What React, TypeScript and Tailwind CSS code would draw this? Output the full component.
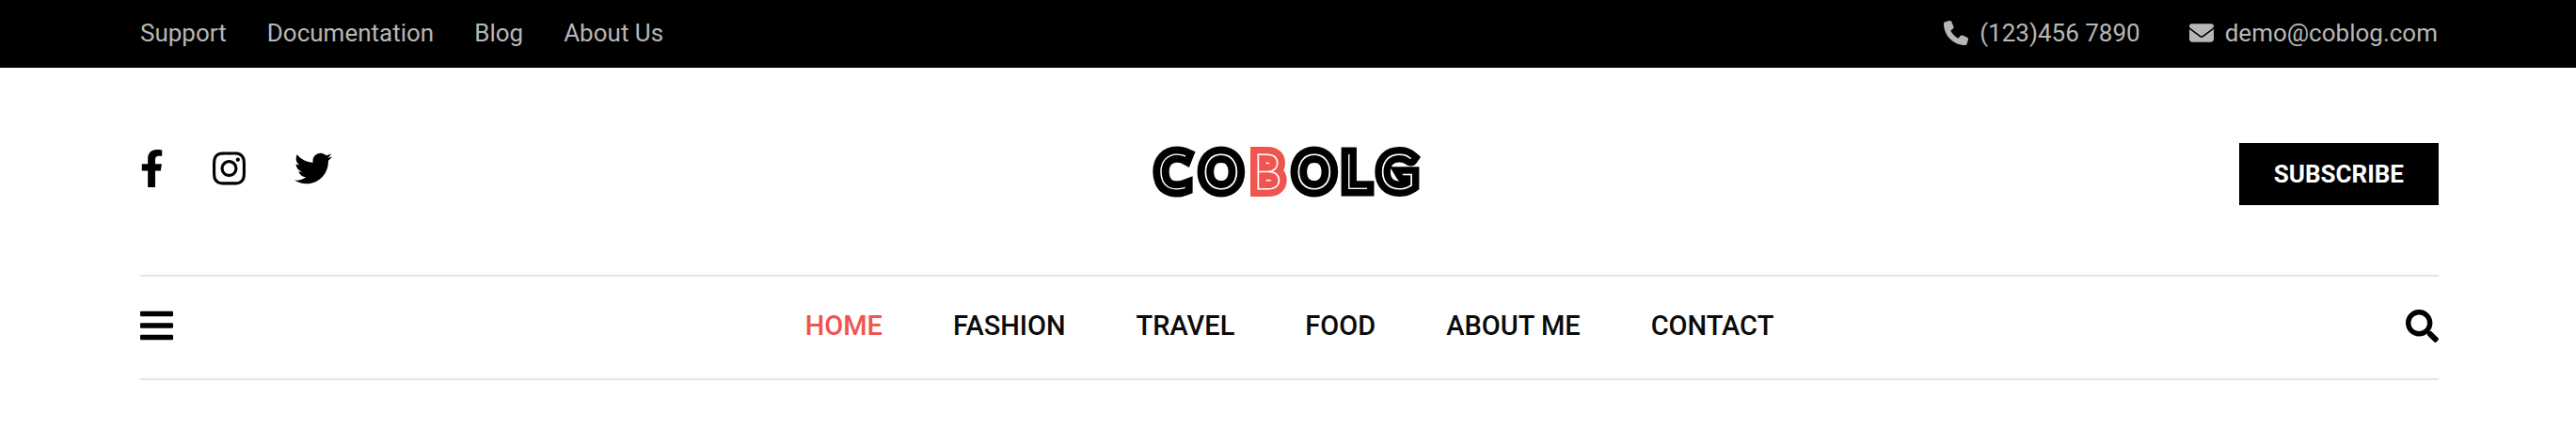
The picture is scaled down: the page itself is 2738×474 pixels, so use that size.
import { FaFacebookF, FaInstagram, FaTwitter, FaBars, FaSearch } from "react-icons/fa";
import { FaPhone, FaEnvelope } from "react-icons/fa6";

const topLinks = ["Support", "Documentation", "Blog", "About Us"];
const navLinks = ["HOME", "FASHION", "TRAVEL", "FOOD", "ABOUT ME", "CONTACT"];

const lato = "font-['Lato',sans-serif]";
const noto = "font-['Noto_Sans',sans-serif]";

const letters = [
  { char: "C", x: 20, color: "#000000", font: noto, weight: 16, line: 0 },
  { char: "O", x: 72, color: "#000000", font: lato, weight: 17, line: 1 },
  { char: "B", x: 121, color: "#f0544f", font: lato, weight: 16, line: 1 },
  { char: "O", x: 171, color: "#000000", font: lato, weight: 17, line: 1 },
  { char: "L", x: 215, color: "#000000", font: noto, weight: 15, line: 0 },
  { char: "G", x: 259, color: "#000000", font: lato, weight: 16, line: 1 },
];

/* Inline lettering: a thin white letter over the same letter with a heavy outline. */
function Logo() {
  return (
    <svg
      viewBox="0 0 290 72"
      className="h-[72px] w-[290px] overflow-visible text-[52px] font-thin"
      role="img"
      aria-label="COBOLG"
    >
      {letters.map(({ char, x, color, font, weight, line }, i) => (
        <g key={i} textAnchor="middle" className={font}>
          <text x={x} y="55" fill={color} stroke={color} strokeWidth={weight}>
            {char}
          </text>
          <text x={x} y="55" fill="#ffffff" stroke="#ffffff" strokeWidth={line}>
            {char}
          </text>
        </g>
      ))}
    </svg>
  );
}

export default function App() {
  return (
    <div className="min-h-screen bg-white font-['Roboto',sans-serif] text-black">
      <div className="flex h-[72px] items-center justify-between bg-black pb-0.5 pl-[149px] pr-[147px] text-[26px] leading-8 text-[#b7b7b7]">
        <nav aria-label="Help" className="flex gap-[43px]">
          {topLinks.map((label) => (
            <a key={label} href="#">
              {label}
            </a>
          ))}
        </nav>
        <div className="flex gap-[52px]">
          <a href="tel:1234567890" className="flex items-center gap-3">
            <FaPhone className="size-[26px]" />
            (123)456 7890
          </a>
          <a href="mailto:demo@coblog.com" className="flex items-center gap-3">
            <FaEnvelope className="size-[26px]" />
            demo@coblog.com
          </a>
        </div>
      </div>

      <header className="pl-[149px] pr-[146px]">
        <div className="grid h-[220px] grid-cols-[1fr_auto_1fr] items-center">
          <div className="flex gap-[52px] pb-1.5">
            <a href="#" aria-label="Facebook">
              <FaFacebookF className="h-10 w-[25px]" />
            </a>
            <a href="#" aria-label="Instagram">
              <FaInstagram className="h-10 w-[35px]" />
            </a>
            <a href="#" aria-label="Twitter">
              <FaTwitter className="size-10" />
            </a>
          </div>
          <a href="#">
            <Logo />
          </a>
          <div className="justify-self-end pt-1.5">
            <button className="block h-[66px] bg-black px-[37px] text-[26px] font-bold text-white">
              SUBSCRIBE
            </button>
          </div>
        </div>

        <div className="flex h-28 items-center justify-between border-y-2 border-[#e5e5e5] pb-1">
          <button aria-label="Menu">
            <FaBars className="h-10 w-[35px]" />
          </button>
          <nav aria-label="Main" className="flex gap-[75px] text-[29px] font-medium leading-8">
            {navLinks.map((label) => (
              <a
                key={label}
                href="#"
                className={label === "HOME" ? "text-[#f0544f]" : "text-[#0b0b0b]"}
              >
                {label}
              </a>
            ))}
          </nav>
          <button aria-label="Search">
            <FaSearch className="size-[35px]" />
          </button>
        </div>
      </header>
    </div>
  );
}
